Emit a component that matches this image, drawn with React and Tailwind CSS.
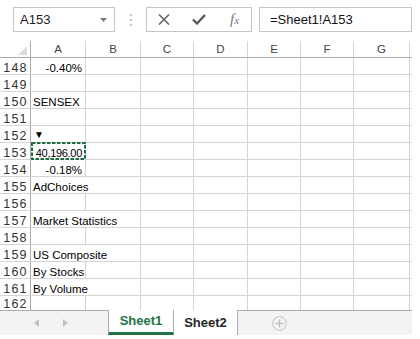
import React from 'react';

const COLS = [
  { l: 'A', w: 'w-[55px]' },
  { l: 'B', w: 'w-[55px]' },
  { l: 'C', w: 'w-[53px]' },
  { l: 'D', w: 'w-[54px]' },
  { l: 'E', w: 'w-[53px]' },
  { l: 'F', w: 'w-[53px]' },
  { l: 'G', w: 'w-[56px]' },
];

const ROWS = [
  { n: 148, a: '-0.40%', right: true },
  { n: 149 },
  { n: 150, a: 'SENSEX' },
  { n: 151 },
  { n: 152, a: '▼', tri: true },
  { n: 153, a: '40,196.00', right: true, sel: true },
  { n: 154, a: '-0.18%', right: true },
  { n: 155, a: 'AdChoices', over: true },
  { n: 156 },
  { n: 157, a: 'Market Statistics', over: true },
  { n: 158 },
  { n: 159, a: 'US Composite', over: true },
  { n: 160, a: 'By Stocks' },
  { n: 161, a: 'By Volume', over: true },
];

function Row({ r, last }) {
  return (
    <div className={`flex ${last ? 'h-[14px]' : 'h-[17px] border-b border-[#d4d4d4]'}`}>
      <div className="w-[31px] shrink-0 border-r border-[#ababab] flex items-end justify-center leading-[12px] text-[12.5px] tracking-[1.2px] text-[#333] pl-[1px]">
        {r.n}
      </div>
      {COLS.map((c, i) => {
        const isA = i === 0;
        const noBorder = isA && r.over;
        return (
          <div
            key={c.l}
            className={`${c.w} shrink-0 relative flex items-end leading-[12px] ${r.sel && isA ? 'text-[11px] tracking-[-0.3px]' : 'text-[11.5px]'} ${noBorder ? '' : 'border-r border-[#d4d4d4]'} ${isA && r.right ? 'justify-end pr-[3px]' : 'pl-[2px]'}`}
          >
            {isA && r.a && !r.tri && (
              <span className="whitespace-nowrap relative z-10">{r.a}</span>
            )}
            {isA && r.tri && (
              <span className="text-[10px] leading-[12px] pl-[1px] pb-[1px]">▼</span>
            )}
            {isA && r.sel && (
              <svg className="absolute -top-[1px] left-0 z-20" width="55" height="18">
                <rect x="1" y="1" width="53" height="16" fill="none" stroke="#1f6b42" strokeWidth="2" strokeDasharray="3.5 1.5" />
              </svg>
            )}
          </div>
        );
      })}
      <div className="w-[3px] shrink-0" />
    </div>
  );
}

export default function App() {
  return (
    <div className="w-[420px] h-[339px] bg-white overflow-hidden font-['Liberation_Sans',Arial,sans-serif] text-black">
      {/* Top bar */}
      <div className="h-[41px] flex items-start pt-[7px] pl-[13px]">
        <div className="w-[102px] h-[25px] border border-[#c6c6c6] flex items-center justify-between pl-[6px] pr-[7px] text-[13px] text-[#222]">
          <span className="pt-[1px]">A153</span>
          <svg width="7" height="4" viewBox="0 0 7 4">
            <path d="M0 0H7L3.5 4Z" fill="#7a7a7a" />
          </svg>
        </div>
        <div className="w-[31px] h-[25px] flex flex-col items-center justify-center gap-[3px]">
          <div className="w-[2px] h-[2px] bg-[#c4c4c4]" />
          <div className="w-[2px] h-[2px] bg-[#c4c4c4]" />
          <div className="w-[2px] h-[2px] bg-[#c4c4c4]" />
        </div>
        <div className="w-[106px] h-[25px] border border-[#c6c6c6] flex items-center">
          <div className="w-[33px] flex justify-center">
            <svg width="12" height="11" viewBox="0 0 12 11">
              <path d="M1 0.5L11 10.5M11 0.5L1 10.5" stroke="#666" strokeWidth="1.6" fill="none" />
            </svg>
          </div>
          <div className="w-[38px] flex justify-center">
            <svg width="14" height="11" viewBox="0 0 14 11">
              <path d="M1 5.5L5 9.5L13 1" stroke="#555" strokeWidth="2.3" fill="none" />
            </svg>
          </div>
          <div className="w-[33px] flex justify-center items-end text-[#7a7a7a] font-['Liberation_Serif',serif] italic">
            <span className="text-[15px] leading-[15px]">f</span>
            <span className="text-[11px] leading-[13px]">x</span>
          </div>
        </div>
        <div className="ml-[7px] w-[153px] h-[25px] border border-[#c6c6c6] flex items-center pl-[10px] text-[13px] text-[#111]">
          <span className="pt-[1px]">=Sheet1!A153</span>
        </div>
      </div>

      {/* Column headers */}
      <div className="flex h-[17px] border-b border-[#ababab] w-[412px]">
        <div className="w-[31px] shrink-0 border-r border-[#ababab] relative">
          <svg className="absolute right-[3px] bottom-[2px]" width="9" height="9" viewBox="0 0 9 9">
            <path d="M9 0V9H0Z" fill="#dcdcdc" />
          </svg>
        </div>
        {COLS.map((c) => (
          <div
            key={c.l}
            className={`${c.w} shrink-0 border-r border-[#d4d4d4] flex items-center justify-center text-[11.5px] text-[#444] pt-[1px]`}
          >
            {c.l}
          </div>
        ))}
        <div className="w-[3px] shrink-0" />
      </div>

      {/* Rows */}
      <div className="w-[412px]">
        {ROWS.map((r) => (
          <Row key={r.n} r={r} />
        ))}
        <Row r={{ n: 162 }} last />
      </div>

      {/* Sheet tabs */}
      <div className="flex w-[412px] h-[25px]">
        <div className="w-[108px] shrink-0 bg-[#f3f3f3] border-t border-[#ababab] flex items-center">
          <svg className="ml-[34px]" width="5" height="8" viewBox="0 0 5 8">
            <path d="M5 0V8L0 4Z" fill="#c2c2c2" />
          </svg>
          <svg className="ml-[24px]" width="5" height="8" viewBox="0 0 5 8">
            <path d="M0 0V8L5 4Z" fill="#c2c2c2" />
          </svg>
        </div>
        <div className="w-[66px] shrink-0 bg-white border-x border-[#ababab] border-b-[3px] border-b-[#217346] flex items-center justify-center text-[13px] font-bold text-[#217346]">
          Sheet1
        </div>
        <div className="w-[64px] shrink-0 bg-white border-r border-[#ababab] flex items-center justify-center text-[13px] font-bold text-[#262626]">
          Sheet2
        </div>
        <div className="flex-1 bg-[#f3f3f3] border-t border-[#ababab] flex items-center">
          <svg className="ml-[34px]" width="15" height="15" viewBox="0 0 15 15">
            <circle cx="7.5" cy="7.5" r="6.8" fill="none" stroke="#c0c0c0" strokeWidth="1" />
            <path d="M7.5 3.5V11.5M3.5 7.5H11.5" stroke="#c0c0c0" strokeWidth="1.4" />
          </svg>
        </div>
      </div>
    </div>
  );
}
